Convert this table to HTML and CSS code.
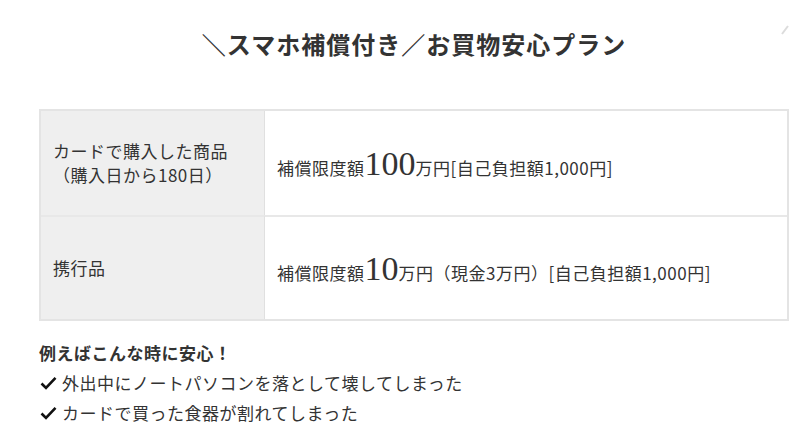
FILE: index.html
```html
<!DOCTYPE html>
<html lang="ja">
<head>
<meta charset="utf-8">
<link rel="stylesheet" href="styles.css">
</head>
<body>
<div class="corner-mark"><svg width="8" height="10" viewBox="0 0 8 10"><line x1="1" y1="9" x2="7" y2="1" stroke="#dcdcdc" stroke-width="2"/></svg></div>
<main class="page">
  <h2 class="title">＼スマホ補償付き／お買物安心プラン</h2>
  <div class="plan">
    <div class="cell head">カードで購入した商品<br>（購入日から180日）</div>
    <div class="cell value"><span>補償限度額<span class="big">100</span>万円[自己負担額1,000円]</span></div>
    <div class="cell head">携行品</div>
    <div class="cell value"><span>補償限度額<span class="big">10</span>万円（現金3万円）[自己負担額1,000円]</span></div>
  </div>
  <p class="lead">例えばこんな時に安心！</p>
  <ul class="checks">
    <li><svg class="check" width="17" height="14" viewBox="0 0 17 14"><path d="M1.5 7.5 L6 12 L15.5 1.8" fill="none" stroke="#111" stroke-width="2.6"/></svg>外出中にノートパソコンを落として壊してしまった</li>
    <li><svg class="check" width="17" height="14" viewBox="0 0 17 14"><path d="M1.5 7.5 L6 12 L15.5 1.8" fill="none" stroke="#111" stroke-width="2.6"/></svg>カードで買った食器が割れてしまった</li>
  </ul>
</main>
</body>
</html>
```

FILE: styles.css
```css
html, body {
  margin: 0;
  padding: 0;
  background: #fff;
}
body {
  font-family: "Noto Sans CJK JP", "Noto Sans", sans-serif;
  color: #333;
  font-size: 17px;
  letter-spacing: 0.5px;
  line-height: 1.6;
}
.corner-mark {
  position: absolute;
  top: 14px;
  right: 2px;
}
.page {
  width: 750px;
  margin-left: 39px;
  padding-top: 26px;
}
.title {
  margin: 0;
  text-align: center;
  font-size: 24px;
  letter-spacing: 1px;
  line-height: 36px;
  font-weight: bold;
  color: #333;
}
.plan {
  margin-top: 47px;
  display: grid;
  grid-template-columns: 224px 1fr;
  grid-auto-rows: 104px;
  border: 2px solid #e4e4e4;
}
.cell {
  display: flex;
  align-items: center;
  padding: 0 12px;
  line-height: 24px;
}
.head {
  background: #efefef;
  border-right: 1px solid #e0e0e0;
}
.cell:nth-child(n+3) {
  border-top: 2px solid #e8e8e8;
}
.value {
  padding-top: 6px;
}
.big {
  font-family: "Liberation Serif", serif;
  font-size: 34px;
  letter-spacing: 0;
  line-height: 24px;
}
.lead {
  margin: 17px 0 0;
  font-weight: bold;
  line-height: 30px;
}
.checks {
  list-style: none;
  margin: 0;
  padding: 0;
}
.checks li {
  display: flex;
  align-items: center;
  line-height: 30px;
}
.check {
  margin-right: 5px;
  margin-left: 1px;
}
```
